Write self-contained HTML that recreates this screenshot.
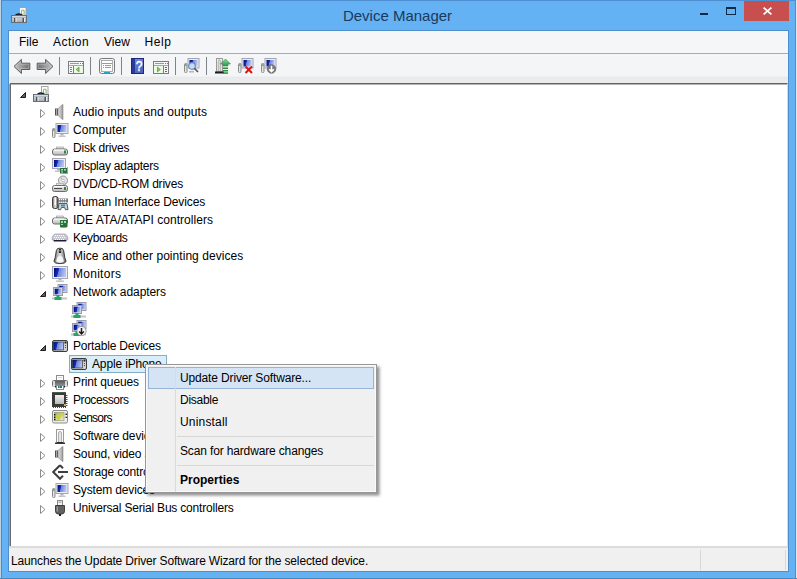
<!DOCTYPE html>
<html><head><meta charset="utf-8"><style>
html,body{margin:0;padding:0;}
body{width:797px;height:579px;overflow:hidden;position:relative;background:#64b1f4;font-family:"Liberation Sans",sans-serif;font-size:12px;color:#000;}
.a{position:absolute;}
svg.a{overflow:visible;}
#edgeL{left:0;top:0;width:1px;height:579px;background:#bcd2e0;}#edgeL2{left:1px;top:0;width:1px;height:579px;background:#4d8cc8;}
#edgeR{left:796px;top:0;width:1px;height:579px;background:#dcecf4;}#edgeR2{left:795px;top:0;width:1px;height:579px;background:#4d8cc8;}
#edgeT{left:0;top:0;width:797px;height:1px;background:#4f8ed0;}#clientb{left:8px;top:30px;width:779px;height:540px;border:1px solid #4e8fcb;}
#edgeB{left:0;top:578px;width:797px;height:1px;background:#4a88c2;}
#title{left:-1px;top:1px;width:797px;height:30px;text-align:center;line-height:30px;font-size:15px;color:#1b3a5c;}
#close{left:744px;top:1px;width:45px;height:20px;background:#c7504e;}
#menubar{left:9px;top:31px;width:779px;height:22px;background:#f5f6f7;border-bottom:1px solid #a8acb0;}
#menubar span{position:absolute;top:4px;}
#toolbar{left:9px;top:54px;width:779px;height:30px;background:linear-gradient(#f4f5f7 0,#f4f5f7 22px,#e9eaec 23px,#ebecee 30px);}
.sep{top:57px;width:1px;height:18px;background:#7f8387;}
#tree{left:10px;top:83px;width:776px;height:462px;background:#fff;border-top:1px solid #646464;border-left:1px solid #6a6a6a;border-right:1px solid #dadada;box-shadow:inset 0 1px 0 #b4b4b4;}
#status{left:9px;top:546px;width:779px;height:23px;background:#f0f0f0;border-top:2px solid #dcdcdc;}
.t{position:absolute;white-space:nowrap;}
#cm{left:145px;top:364px;width:230px;height:127px;background:#f0f0f0;border:1px solid #979797;box-shadow:inset 0 0 0 1px #f9f9f9,2px 2px 3px 0.5px rgba(0,0,0,0.45);}
.cmi{left:34px;height:22px;line-height:22px;white-space:nowrap;}
</style></head><body>
<svg width="0" height="0" style="position:absolute"><defs>
<linearGradient id="scr" x1="0" y1="0" x2="1" y2="0.2"><stop offset="0" stop-color="#000870"/><stop offset="0.4" stop-color="#1430b8"/><stop offset="0.46" stop-color="#6c84dc"/><stop offset="1" stop-color="#b4c2f0"/></linearGradient>
<linearGradient id="tbx" x1="0" y1="0" x2="0" y2="1"><stop offset="0" stop-color="#b4bcc4"/><stop offset="0.3" stop-color="#8c969e"/><stop offset="0.45" stop-color="#c8ced4"/><stop offset="1" stop-color="#a2aab2"/></linearGradient>
<linearGradient id="arrh" x1="0" y1="0" x2="1" y2="0"><stop offset="0" stop-color="#c8c8c8"/><stop offset="0.5" stop-color="#9a9a9a"/><stop offset="1" stop-color="#6e6e6e"/></linearGradient>
<linearGradient id="prn" x1="0" y1="0" x2="0" y2="1"><stop offset="0" stop-color="#5c5c5c"/><stop offset="1" stop-color="#8e8e8e"/></linearGradient>
<linearGradient id="sens" x1="0" y1="0" x2="1" y2="1"><stop offset="0" stop-color="#9aa858"/><stop offset="0.5" stop-color="#c8d890"/><stop offset="1" stop-color="#e4ecc8"/></linearGradient>
<linearGradient id="scr2" x1="0" y1="0" x2="1" y2="0.2"><stop offset="0" stop-color="#000870"/><stop offset="0.55" stop-color="#1430b8"/><stop offset="0.62" stop-color="#7088dc"/><stop offset="1" stop-color="#a8b8ec"/></linearGradient>
<linearGradient id="gry" x1="0" y1="0" x2="0" y2="1"><stop offset="0" stop-color="#f2f2f2"/><stop offset="1" stop-color="#b9b9b9"/></linearGradient>
<linearGradient id="gryh" x1="0" y1="0" x2="1" y2="0"><stop offset="0" stop-color="#6a6a6a"/><stop offset="0.5" stop-color="#e4e4e4"/><stop offset="1" stop-color="#5a5a5a"/></linearGradient>
<linearGradient id="arr" x1="0" y1="0" x2="0" y2="1"><stop offset="0" stop-color="#b8b8b8"/><stop offset="0.5" stop-color="#6e6e6e"/><stop offset="1" stop-color="#a8a8a8"/></linearGradient>
<linearGradient id="cone" x1="0" y1="0" x2="1" y2="0"><stop offset="0" stop-color="#d8d8d8"/><stop offset="0.6" stop-color="#bdbdbd"/><stop offset="1" stop-color="#8e8e8e"/></linearGradient>
<linearGradient id="grn" x1="0" y1="0" x2="0" y2="1"><stop offset="0" stop-color="#8fdc9c"/><stop offset="1" stop-color="#1f9a44"/></linearGradient>
<linearGradient id="hlp" x1="0" y1="0" x2="0.3" y2="1"><stop offset="0" stop-color="#7088dc"/><stop offset="1" stop-color="#4a62c0"/></linearGradient>
</defs></svg>
<div class="a" id="edgeT"></div><div class="a" id="clientb"></div><div class="a" id="title">Device Manager</div><svg class="a" style="left:11px;top:7px" width="16" height="16" viewBox="0 0 16 16"><rect x="8.5" y="0.5" width="6.5" height="8" fill="#fdfdfd" stroke="#a4a4a4"/><path d="M10.5 8.5 V4.3 A1.3 1.3 0 0 1 13.1 4.3 V8.5" fill="none" stroke="#90b078" stroke-width="1.1"/><path d="M4 8.8 Q7.5 5.4 11.5 8.4" fill="none" stroke="#141414" stroke-width="1.5"/><rect x="0.5" y="8.5" width="15" height="7" fill="url(#tbx)" stroke="#66707a"/><rect x="1" y="9" width="14" height="1.5" fill="#d4dae0"/><rect x="3" y="11" width="1.5" height="4" fill="#4a5258"/><rect x="11.5" y="11" width="1.5" height="4" fill="#4a5258"/><rect x="4.5" y="11" width="1" height="4" fill="#e8ecf0"/><rect x="13" y="11" width="1" height="4" fill="#e8ecf0"/></svg><div class="a" style="left:700px;top:13px;width:8px;height:2px;background:#0f2a46"></div><div class="a" style="left:726px;top:7px;width:8px;height:5px;border:1px solid #0f2a46;border-top-width:2px"></div><div class="a" id="close"></div><svg class="a" style="left:763px;top:7px" width="9" height="8" viewBox="0 0 9 8"><path d="M0.6 0.6 L8.4 7.4 M8.4 0.6 L0.6 7.4" stroke="#fff" stroke-width="1.8"/></svg><div class="a" id="menubar"><span style="left:10px">File</span><span style="left:44px;letter-spacing:0.45px">Action</span><span style="left:95px">View</span><span style="left:135.5px;letter-spacing:0.6px">Help</span></div><div class="a" id="toolbar"></div><svg class="a" style="left:13px;top:58px" width="18" height="18" viewBox="0 0 18 18"><path d="M1 8.4 L8.4 1.4 L8.4 5.2 L16.8 5.2 L16.8 11.5 L8.4 11.5 L8.4 15.5 Z" fill="url(#arrh)" stroke="#5c5c5c" stroke-width="1" stroke-linejoin="round"/><path d="M2.6 8.4 L7.4 3.8 L7.4 6.2 L15.8 6.2 L15.8 10.5 L7.4 10.5 L7.4 13.1 Z" fill="none" stroke="#d8d8d8" stroke-width="0.6" opacity="0.7"/></svg><svg class="a" style="left:36px;top:58px" width="18" height="18" viewBox="0 0 18 18"><g transform="translate(18,0) scale(-1,1)"><path d="M1 8.4 L8.4 1.4 L8.4 5.2 L16.8 5.2 L16.8 11.5 L8.4 11.5 L8.4 15.5 Z" fill="url(#arrh)" stroke="#5c5c5c" stroke-width="1" stroke-linejoin="round"/><path d="M2.6 8.4 L7.4 3.8 L7.4 6.2 L15.8 6.2 L15.8 10.5 L7.4 10.5 L7.4 13.1 Z" fill="none" stroke="#d8d8d8" stroke-width="0.6" opacity="0.7"/></g></svg><svg class="a" style="left:68px;top:61px" width="16" height="13" viewBox="0 0 16 13"><rect x="0.5" y="0.5" width="15" height="12" fill="#f6f6f6" stroke="#7c7c7c"/><rect x="2" y="2" width="9" height="1" fill="#9a9a9a"/><rect x="12" y="2" width="1" height="1" fill="#7a7a7a"/><rect x="14" y="2" width="1" height="1" fill="#7a7a7a"/><rect x="1" y="4" width="14" height="1" fill="#a6a6a6"/><rect x="5" y="5" width="1" height="7" fill="#7c7c7c"/><rect x="6" y="5" width="9" height="7" fill="#eef8e6"/><path d="M11 6.2 L8.2 8.5 L11 10.8 Z" fill="#9ad080" stroke="#4e9a3a" stroke-width="0.8"/><g fill="#5a88b4"><rect x="2" y="6" width="2" height="1"/><rect x="2" y="8" width="2" height="1"/><rect x="2" y="10" width="2" height="1"/></g></svg><svg class="a" style="left:99px;top:58px" width="16" height="16" viewBox="0 0 16 16"><rect x="0.5" y="0.5" width="15" height="15" rx="2" fill="#f4f4f4" stroke="#7a7a7a"/><rect x="2.5" y="2.5" width="11" height="11" fill="#fff" stroke="#9a9a9a" stroke-width="0.8"/><rect x="3" y="5" width="10" height="1" fill="#9a9a9a"/><g fill="#7aa0c0"><rect x="4" y="7" width="1" height="1"/><rect x="6" y="7" width="6" height="1"/><rect x="4" y="9" width="1" height="1"/><rect x="6" y="9" width="6" height="1"/></g><rect x="5" y="14" width="6" height="1.5" fill="#2aa0d0"/></svg><svg class="a" style="left:131px;top:58px" width="13" height="16" viewBox="0 0 13 16"><rect x="0.5" y="0.5" width="12" height="15" fill="#5670c8" stroke="#1c2878"/><rect x="1" y="1" width="3" height="14" fill="#2a3a9c"/><rect x="4" y="1" width="8" height="14" fill="url(#hlp)"/><text x="0" y="0" transform="translate(8.2,13.2) scale(0.8,1)" font-family="Liberation Sans" font-size="15" fill="#fff" stroke="#fff" stroke-width="0.5" text-anchor="middle">?</text></svg><svg class="a" style="left:153px;top:61px" width="16" height="13" viewBox="0 0 16 13"><rect x="0.5" y="0.5" width="15" height="12" fill="#f6f6f6" stroke="#7c7c7c"/><rect x="2" y="2" width="9" height="1" fill="#9a9a9a"/><rect x="12" y="2" width="1" height="1" fill="#7a7a7a"/><rect x="14" y="2" width="1" height="1" fill="#7a7a7a"/><rect x="1" y="4" width="14" height="1" fill="#a6a6a6"/><rect x="10" y="5" width="1" height="7" fill="#7c7c7c"/><rect x="1" y="5" width="9" height="7" fill="#eef8e6"/><path d="M4.5 6.2 L7.3 8.5 L4.5 10.8 Z" fill="#9ad080" stroke="#4e9a3a" stroke-width="0.8"/><g fill="#6a6a6a"><rect x="12" y="6" width="2" height="1"/><rect x="12" y="8" width="2" height="1"/><rect x="12" y="10" width="2" height="1"/></g></svg><svg class="a" style="left:184px;top:58px" width="16" height="16" viewBox="0 0 16 16"><g transform="translate(0,5)"><rect x="0.5" y="0.5" width="2.5" height="9" rx="1" fill="#e4e4e4" stroke="#8c8c8c"/><rect x="1.2" y="1.3" width="1.2" height="1.4" fill="#3a7a3a"/></g><g transform="translate(3.5,0)"><rect x="0.5" y="0.5" width="11" height="9.5" fill="#ececf2" stroke="#a4a4b4"/><rect x="2" y="2" width="8" height="6.5" fill="url(#scr)"/></g><circle cx="8" cy="8" r="3.3" fill="#c8e0f8" stroke="#6a8ab8" stroke-width="1.2" opacity="0.95"/><path d="M10.3 10.3 L14 14" stroke="#505050" stroke-width="1.6"/><rect x="5" y="13" width="5" height="1.5" fill="#b4b4bc"/></svg><svg class="a" style="left:215px;top:58px" width="16" height="16" viewBox="0 0 16 16"><rect x="1.5" y="0.5" width="6" height="13" fill="#f4f4f4" stroke="#9a9a9a"/><path d="M3.2 13 V3.5 A1.3 1.3 0 0 1 5.8 3.5 V13" fill="#d8d8d8" stroke="#9a9a9a" stroke-width="0.7"/><path d="M3 2 L5 1.5" stroke="#c8c080" stroke-width="0.8"/><rect x="0" y="13.5" width="9" height="2" fill="#1e1e1e"/><path d="M10.5 1 L15.5 6 L13 6 L13 8 L8 8 L8 6 L5.5 6 Z" fill="url(#grn)" stroke="#3a8a4a" stroke-width="0.6"/><rect x="8" y="9.5" width="5" height="1.5" fill="#2a8a40"/><rect x="8" y="12" width="5" height="1.5" fill="#2a8a40"/><rect x="8" y="14.3" width="5" height="1.5" fill="#2a8a40"/></svg><svg class="a" style="left:238px;top:58px" width="16" height="16" viewBox="0 0 16 16"><g transform="translate(0,5)"><rect x="0.5" y="0.5" width="2.5" height="9" rx="1" fill="#e4e4e4" stroke="#8c8c8c"/><rect x="1.2" y="1.3" width="1.2" height="1.4" fill="#3a7a3a"/></g><g transform="translate(3.5,0)"><rect x="0.5" y="0.5" width="11" height="9.5" fill="#ececf2" stroke="#a4a4b4"/><rect x="2" y="2" width="8" height="6.5" fill="url(#scr)"/></g><path d="M7.5 8.5 L14 15 M14 8.5 L7.5 15" stroke="#d01818" stroke-width="2"/></svg><svg class="a" style="left:261px;top:58px" width="16" height="16" viewBox="0 0 16 16"><g transform="translate(0,5)"><rect x="0.5" y="0.5" width="2.5" height="9" rx="1" fill="#e4e4e4" stroke="#8c8c8c"/><rect x="1.2" y="1.3" width="1.2" height="1.4" fill="#3a7a3a"/></g><g transform="translate(3.5,0)"><rect x="0.5" y="0.5" width="11" height="9.5" fill="#ececf2" stroke="#a4a4b4"/><rect x="2" y="2" width="8" height="6.5" fill="url(#scr)"/></g><circle cx="10.5" cy="11" r="4.3" fill="#7a7a7a" stroke="#5a5a5a" stroke-width="0.6"/><path d="M10.5 7.8 V13.5 M8.2 11.2 L10.5 13.6 L12.8 11.2" fill="none" stroke="#fff" stroke-width="1.5"/></svg><div class="a sep" style="left:59px"></div><div class="a sep" style="left:90px"></div><div class="a sep" style="left:121px"></div><div class="a sep" style="left:175px"></div><div class="a sep" style="left:206px"></div><div class="a" id="tree"></div><svg class="a" style="left:20px;top:92px" width="6" height="6" viewBox="0 0 6 6"><path d="M5.5 0.5 L5.5 5.5 L0.5 5.5 Z" fill="#5e5e5e" stroke="#1e1e1e" stroke-width="1" stroke-linejoin="round"/></svg><svg class="a" style="left:33px;top:86px" width="16" height="16" viewBox="0 0 16 16"><rect x="8.5" y="0.5" width="6.5" height="8" fill="#fdfdfd" stroke="#a4a4a4"/><path d="M10.5 8.5 V4.3 A1.3 1.3 0 0 1 13.1 4.3 V8.5" fill="none" stroke="#90b078" stroke-width="1.1"/><path d="M4 8.8 Q7.5 5.4 11.5 8.4" fill="none" stroke="#141414" stroke-width="1.5"/><rect x="0.5" y="8.5" width="15" height="7" fill="url(#tbx)" stroke="#66707a"/><rect x="1" y="9" width="14" height="1.5" fill="#d4dae0"/><rect x="3" y="11" width="1.5" height="4" fill="#4a5258"/><rect x="11.5" y="11" width="1.5" height="4" fill="#4a5258"/><rect x="4.5" y="11" width="1" height="4" fill="#e8ecf0"/><rect x="13" y="11" width="1" height="4" fill="#e8ecf0"/></svg><svg class="a" style="left:40px;top:109px" width="6" height="9" viewBox="0 0 6 9"><path d="M0.5 0.5 L5 4.5 L0.5 8.5 Z" fill="#fff" stroke="#8c8c8c"/></svg><svg class="a" style="left:52px;top:104px" width="16" height="16" viewBox="0 0 16 16"><rect x="3" y="4.5" width="3" height="7" fill="#505050"/><rect x="4" y="5" width="1" height="6" fill="#a8a8a8"/><path d="M6 4.5 L10.5 0.5 L11 0.5 L11 15.5 L10.5 15.5 L6 11.5 Z" fill="url(#cone)" stroke="#8a8a8a" stroke-width="0.6"/></svg><div class="t" style="left:73px;top:103px;line-height:18px;letter-spacing:0.083px">Audio inputs and outputs</div><svg class="a" style="left:40px;top:127px" width="6" height="9" viewBox="0 0 6 9"><path d="M0.5 0.5 L5 4.5 L0.5 8.5 Z" fill="#fff" stroke="#8c8c8c"/></svg><svg class="a" style="left:52px;top:122px" width="16" height="16" viewBox="0 0 16 16"><g transform="translate(0,6)"><rect x="0.5" y="0.5" width="2.5" height="9" rx="1" fill="#e4e4e4" stroke="#8c8c8c"/><rect x="1.2" y="1.3" width="1.2" height="1.4" fill="#3a7a3a"/></g><g transform="translate(3.5,1) scale(1.0)"><rect x="0.5" y="0.5" width="12" height="10" fill="#ececf2" stroke="#a4a4b4"/><rect x="2" y="2" width="9" height="7" fill="url(#scr)"/><rect x="5" y="11" width="3" height="1.5" fill="#b0b0b8"/><rect x="3" y="12.5" width="7" height="1.5" fill="#c4c4cc"/></g></svg><div class="t" style="left:73px;top:121px;line-height:18px;letter-spacing:0.086px">Computer</div><svg class="a" style="left:40px;top:145px" width="6" height="9" viewBox="0 0 6 9"><path d="M0.5 0.5 L5 4.5 L0.5 8.5 Z" fill="#fff" stroke="#8c8c8c"/></svg><svg class="a" style="left:52px;top:140px" width="16" height="16" viewBox="0 0 16 16"><rect x="4.5" y="7.0" width="7" height="2" fill="#e0e0e0" stroke="#a8a8a8" stroke-width="0.7"/><rect x="0.5" y="9.0" width="15" height="6" rx="2" fill="url(#gry)" stroke="#6e6e6e"/><rect x="2" y="9.5" width="10" height="1" fill="#fff"/><rect x="12" y="10.5" width="2" height="3" fill="#2e8a3a"/></svg><div class="t" style="left:73px;top:139px;line-height:18px;letter-spacing:-0.225px">Disk drives</div><svg class="a" style="left:40px;top:163px" width="6" height="9" viewBox="0 0 6 9"><path d="M0.5 0.5 L5 4.5 L0.5 8.5 Z" fill="#fff" stroke="#8c8c8c"/></svg><svg class="a" style="left:52px;top:158px" width="16" height="16" viewBox="0 0 16 16"><rect x="0.5" y="0.5" width="13" height="10" fill="#ececf2" stroke="#a4a4b4"/><rect x="2" y="2" width="10" height="7" fill="url(#scr)"/><rect x="5" y="11" width="3" height="1.5" fill="#b0b0b8"/><rect x="3" y="12.5" width="6" height="1.5" fill="#c4c4cc"/><rect x="8" y="10" width="7.5" height="5.5" fill="#2c6e3c"/><rect x="9" y="11" width="2" height="1.6" fill="#9fdca8"/><rect x="12" y="11" width="2" height="1.6" fill="#9fdca8"/><rect x="9" y="13.4" width="2" height="1.2" fill="#9fdca8"/><rect x="15" y="9" width="1" height="7" fill="#a0a0a0"/><rect x="8.5" y="15.5" width="6" height="0.5" fill="#9ab04a"/></svg><div class="t" style="left:73px;top:157px;line-height:18px;letter-spacing:-0.227px">Display adapters</div><svg class="a" style="left:40px;top:181px" width="6" height="9" viewBox="0 0 6 9"><path d="M0.5 0.5 L5 4.5 L0.5 8.5 Z" fill="#fff" stroke="#8c8c8c"/></svg><svg class="a" style="left:52px;top:176px" width="16" height="16" viewBox="0 0 16 16"><circle cx="11" cy="4.5" r="4.5" fill="#e4e4e4" stroke="#8c8c8c" stroke-width="0.9"/><circle cx="11" cy="4.5" r="1.3" fill="#fff" stroke="#a0a0a0" stroke-width="0.6"/><path d="M9 1.5 L10 3.5 M12.5 6 L13.5 8" stroke="#b494c4" stroke-width="0.8"/><rect x="4.5" y="7.5" width="7" height="2" fill="#e0e0e0" stroke="#a8a8a8" stroke-width="0.7"/><rect x="0.5" y="9.5" width="15" height="6" rx="2" fill="url(#gry)" stroke="#6e6e6e"/><rect x="2" y="10" width="10" height="1" fill="#fff"/><rect x="2" y="12" width="8" height="1" fill="#4a4a4a"/><rect x="12" y="11" width="2" height="3" fill="#2e8a3a"/></svg><div class="t" style="left:73px;top:175px;line-height:18px;letter-spacing:-0.2px">DVD/CD-ROM drives</div><svg class="a" style="left:40px;top:199px" width="6" height="9" viewBox="0 0 6 9"><path d="M0.5 0.5 L5 4.5 L0.5 8.5 Z" fill="#fff" stroke="#8c8c8c"/></svg><svg class="a" style="left:52px;top:194px" width="16" height="16" viewBox="0 0 16 16"><rect x="0.5" y="2.5" width="5.5" height="12" rx="2" fill="url(#gryh)" stroke="#333" stroke-width="0.9"/><path d="M2.6 4 Q3.2 3.4 4 4 L3.8 6 L4 11 L2.4 11 L2.7 6 Z" fill="#fff"/><rect x="6" y="4.5" width="10" height="4" fill="#7a7a80"/><g fill="#fff"><rect x="7" y="5" width="1.2" height="1.2"/><rect x="9" y="5" width="1.2" height="1.2"/><rect x="11" y="5" width="1.2" height="1.2"/><rect x="13" y="5" width="1.2" height="1.2"/><rect x="7" y="7.6" width="1.2" height="1"/><rect x="9" y="7.6" width="1.2" height="1"/><rect x="11" y="7.6" width="1.2" height="1"/><rect x="13" y="7.6" width="1.2" height="1"/></g><path d="M7 9.5 L15 9.5 L16 15.5 L13.5 15.8 L12.5 13.5 L9.5 13.5 L8.5 15.8 L6 15.5 Z" fill="#c4d0dc" stroke="#3a3a3a" stroke-width="0.8"/><rect x="9" y="10.5" width="4" height="2" fill="#4a8aa8"/></svg><div class="t" style="left:73px;top:193px;line-height:18px;letter-spacing:-0.114px">Human Interface Devices</div><svg class="a" style="left:40px;top:217px" width="6" height="9" viewBox="0 0 6 9"><path d="M0.5 0.5 L5 4.5 L0.5 8.5 Z" fill="#fff" stroke="#8c8c8c"/></svg><svg class="a" style="left:52px;top:212px" width="16" height="16" viewBox="0 0 16 16"><rect x="4.5" y="4.0" width="7" height="2" fill="#e0e0e0" stroke="#a8a8a8" stroke-width="0.7"/><rect x="0.5" y="6.0" width="15" height="6" rx="2" fill="url(#gry)" stroke="#6e6e6e"/><rect x="2" y="6.5" width="10" height="1" fill="#fff"/><rect x="8" y="8" width="7.5" height="7" fill="#2c6e3c"/><rect x="9" y="9" width="2" height="2" fill="#9fdca8"/><rect x="12" y="9" width="2" height="2" fill="#9fdca8"/><rect x="9" y="12" width="2" height="1" fill="#9fdca8"/><rect x="8.5" y="15" width="6" height="1" fill="#9ab04a"/></svg><div class="t" style="left:73px;top:211px;line-height:18px;letter-spacing:0.033px">IDE ATA/ATAPI controllers</div><svg class="a" style="left:40px;top:235px" width="6" height="9" viewBox="0 0 6 9"><path d="M0.5 0.5 L5 4.5 L0.5 8.5 Z" fill="#fff" stroke="#8c8c8c"/></svg><svg class="a" style="left:52px;top:230px" width="16" height="16" viewBox="0 0 16 16"><path d="M2.5 4 L13.5 4 L15.8 7 L15.8 10 L0.2 10 L0.2 7 Z" fill="#c8c8d4" stroke="#a4a4b4" stroke-width="0.8"/><g fill="#ffffff"><rect x="3" y="5" width="1" height="1"/><rect x="5" y="5" width="1" height="1"/><rect x="7" y="5" width="1" height="1"/><rect x="9" y="5" width="1" height="1"/><rect x="11" y="5" width="1" height="1"/><rect x="2" y="7" width="1" height="1"/><rect x="4" y="7" width="1" height="1"/><rect x="6" y="7" width="1" height="1"/><rect x="8" y="7" width="1" height="1"/><rect x="10" y="7" width="1" height="1"/><rect x="12" y="7" width="1" height="1"/><rect x="3" y="9" width="1" height="1"/><rect x="5" y="9" width="1" height="1"/><rect x="7" y="9" width="1" height="1"/><rect x="9" y="9" width="1" height="1"/><rect x="11" y="9" width="1" height="1"/></g><rect x="1.5" y="10" width="13" height="1.5" rx="0.7" fill="#1e1e34"/></svg><div class="t" style="left:73px;top:229px;line-height:18px;letter-spacing:-0.312px">Keyboards</div><svg class="a" style="left:40px;top:253px" width="6" height="9" viewBox="0 0 6 9"><path d="M0.5 0.5 L5 4.5 L0.5 8.5 Z" fill="#fff" stroke="#8c8c8c"/></svg><svg class="a" style="left:52px;top:248px" width="16" height="16" viewBox="0 0 16 16"><path d="M5.5 0.6 Q8 -0.2 10.5 0.6 Q12 2 12.2 6 Q12.6 10 14 13 Q14 15.5 8 15.6 Q2 15.5 2 13 Q3.4 10 3.8 6 Q4 2 5.5 0.6 Z" fill="url(#gryh)" stroke="#2e2e2e" stroke-width="0.9"/><path d="M7 1.2 Q8 0.8 9 1.2 L9.2 4.6 Q8 5.6 6.8 4.6 Z" fill="#101010"/><rect x="7.6" y="2" width="0.9" height="1.6" fill="#ddd"/><path d="M5.5 9 Q8 7 10.5 9 L12 13.5 Q8 15 4 13.5 Z" fill="#f6f6f6"/></svg><div class="t" style="left:73px;top:247px;line-height:18px;letter-spacing:0.047px">Mice and other pointing devices</div><svg class="a" style="left:40px;top:271px" width="6" height="9" viewBox="0 0 6 9"><path d="M0.5 0.5 L5 4.5 L0.5 8.5 Z" fill="#fff" stroke="#8c8c8c"/></svg><svg class="a" style="left:52px;top:266px" width="16" height="16" viewBox="0 0 16 16"><rect x="0.5" y="0.5" width="15" height="12" fill="#ececf2" stroke="#a4a4b4"/><rect x="2" y="2" width="12" height="9" fill="url(#scr)"/><rect x="6.5" y="13" width="3" height="1.5" fill="#b0b0b8"/><rect x="4" y="14.5" width="8" height="1.5" fill="#c4c4cc"/></svg><div class="t" style="left:73px;top:265px;line-height:18px;letter-spacing:0.271px">Monitors</div><svg class="a" style="left:40px;top:291px" width="6" height="6" viewBox="0 0 6 6"><path d="M5.5 0.5 L5.5 5.5 L0.5 5.5 Z" fill="#5e5e5e" stroke="#1e1e1e" stroke-width="1" stroke-linejoin="round"/></svg><svg class="a" style="left:52px;top:284px" width="16" height="16" viewBox="0 0 16 16"><g transform="translate(5.5,0)"><rect x="0.5" y="0.5" width="9" height="8" fill="#dcdce8" stroke="#9a9aae"/><rect x="1.7" y="1.7" width="6.6" height="5.6" fill="url(#scr2)"/></g><g transform="translate(1,3)"><rect x="0.5" y="0.5" width="9" height="8" fill="#dcdce8" stroke="#9a9aae"/><rect x="1.7" y="1.7" width="6.6" height="5.6" fill="url(#scr2)"/></g><rect x="0" y="13.5" width="15" height="2" fill="#c4c4c4"/><rect x="4.5" y="11" width="3" height="2.5" fill="#22a862"/><rect x="2.5" y="13" width="7" height="3" fill="#22a862"/></svg><div class="t" style="left:73px;top:283px;line-height:18px;letter-spacing:-0.067px">Network adapters</div><svg class="a" style="left:71px;top:302px" width="16" height="16" viewBox="0 0 16 16"><g transform="translate(5.5,0)"><rect x="0.5" y="0.5" width="9" height="8" fill="#dcdce8" stroke="#9a9aae"/><rect x="1.7" y="1.7" width="6.6" height="5.6" fill="url(#scr2)"/></g><g transform="translate(1,3)"><rect x="0.5" y="0.5" width="9" height="8" fill="#dcdce8" stroke="#9a9aae"/><rect x="1.7" y="1.7" width="6.6" height="5.6" fill="url(#scr2)"/></g><rect x="0" y="13.5" width="15" height="2" fill="#c4c4c4"/><rect x="4.5" y="11" width="3" height="2.5" fill="#22a862"/><rect x="2.5" y="13" width="7" height="3" fill="#22a862"/></svg><svg class="a" style="left:71px;top:320px" width="16" height="16" viewBox="0 0 16 16"><g transform="translate(5.5,0)"><rect x="0.5" y="0.5" width="9" height="8" fill="#dcdce8" stroke="#9a9aae"/><rect x="1.7" y="1.7" width="6.6" height="5.6" fill="url(#scr2)"/></g><g transform="translate(1,3)"><rect x="0.5" y="0.5" width="9" height="8" fill="#dcdce8" stroke="#9a9aae"/><rect x="1.7" y="1.7" width="6.6" height="5.6" fill="url(#scr2)"/></g><rect x="0" y="13.5" width="15" height="2" fill="#c4c4c4"/><rect x="4.5" y="11" width="3" height="2.5" fill="#22a862"/><rect x="2.5" y="13" width="7" height="3" fill="#22a862"/><circle cx="10.5" cy="11" r="4.6" fill="#f4f4f4" stroke="#8a8a8a" stroke-width="0.8"/><path d="M10.5 8 V13.8 M8.2 11.4 L10.5 13.9 L12.8 11.4" fill="none" stroke="#1e1e1e" stroke-width="1.5"/></svg><svg class="a" style="left:40px;top:345px" width="6" height="6" viewBox="0 0 6 6"><path d="M5.5 0.5 L5.5 5.5 L0.5 5.5 Z" fill="#5e5e5e" stroke="#1e1e1e" stroke-width="1" stroke-linejoin="round"/></svg><svg class="a" style="left:52px;top:338px" width="16" height="16" viewBox="0 0 16 16"><rect x="0.5" y="2.5" width="15" height="11" rx="1.5" fill="#d0d0d0" stroke="#3c3c3c"/><rect x="1.5" y="4" width="10" height="8" fill="url(#scr)" stroke="#222" stroke-width="0.6"/><rect x="12.5" y="3.5" width="2" height="2" fill="#222"/><rect x="13" y="7" width="1" height="1" fill="#555"/><rect x="13" y="9" width="1" height="1" fill="#555"/></svg><div class="t" style="left:73px;top:337px;line-height:18px;letter-spacing:-0.187px">Portable Devices</div><div class="a" style="left:69px;top:355px;width:96px;height:16px;background:#d9eef9;border:1px solid #84aec2"></div><svg class="a" style="left:71px;top:356px" width="16" height="16" viewBox="0 0 16 16"><rect x="0.5" y="2.5" width="15" height="11" rx="1.5" fill="#d0d0d0" stroke="#3c3c3c"/><rect x="1.5" y="4" width="10" height="8" fill="url(#scr)" stroke="#222" stroke-width="0.6"/><rect x="12.5" y="3.5" width="2" height="2" fill="#222"/><rect x="13" y="7" width="1" height="1" fill="#555"/><rect x="13" y="9" width="1" height="1" fill="#555"/></svg><div class="t" style="left:92px;top:355px;line-height:18px;letter-spacing:-0.15px">Apple iPhone</div><svg class="a" style="left:40px;top:379px" width="6" height="9" viewBox="0 0 6 9"><path d="M0.5 0.5 L5 4.5 L0.5 8.5 Z" fill="#fff" stroke="#8c8c8c"/></svg><svg class="a" style="left:52px;top:374px" width="16" height="16" viewBox="0 0 16 16"><rect x="4.5" y="1.5" width="7" height="5" fill="#fcfcfc" stroke="#8c8c8c"/><rect x="6" y="3" width="4" height="1" fill="#dcdcdc"/><rect x="0.5" y="6.5" width="15" height="6" rx="1" fill="#d8d8d8" stroke="#6c6c6c"/><rect x="3" y="7" width="10" height="4.5" fill="url(#prn)"/><rect x="1" y="11" width="14" height="1.5" fill="#f6f6f6"/><rect x="3" y="11.5" width="1" height="2" fill="#222"/><rect x="12" y="11.5" width="1" height="2" fill="#222"/><rect x="4.5" y="11.5" width="7" height="4" fill="#fff" stroke="#8c8c8c"/><rect x="6" y="12" width="4" height="2" fill="#1e7878"/><rect x="7" y="12.5" width="1" height="1" fill="#a0e0e0"/></svg><div class="t" style="left:73px;top:373px;line-height:18px;letter-spacing:-0.118px">Print queues</div><svg class="a" style="left:40px;top:397px" width="6" height="9" viewBox="0 0 6 9"><path d="M0.5 0.5 L5 4.5 L0.5 8.5 Z" fill="#fff" stroke="#8c8c8c"/></svg><svg class="a" style="left:52px;top:392px" width="16" height="16" viewBox="0 0 16 16"><rect x="0" y="0" width="14" height="15" fill="#3a3a3a"/><rect x="0" y="0" width="14" height="1" fill="#4a5a4a"/><rect x="3" y="3" width="9" height="9" fill="url(#gry)"/><rect x="12" y="12" width="2" height="2" fill="#c8b070"/><g fill="#5a5040"><rect x="14" y="3" width="1.5" height="1"/><rect x="14" y="5" width="1.5" height="1"/><rect x="14" y="7" width="1.5" height="1"/><rect x="14" y="9" width="1.5" height="1"/><rect x="14" y="11" width="1.5" height="1"/><rect x="14" y="13" width="1.5" height="1"/><rect x="1" y="15" width="1" height="1"/><rect x="3" y="15" width="1" height="1"/><rect x="5" y="15" width="1" height="1"/><rect x="7" y="15" width="1" height="1"/><rect x="9" y="15" width="1" height="1"/><rect x="11" y="15" width="1" height="1"/><rect x="13" y="15" width="1" height="1"/></g></svg><div class="t" style="left:73px;top:391px;line-height:18px;letter-spacing:-0.433px">Processors</div><svg class="a" style="left:40px;top:415px" width="6" height="9" viewBox="0 0 6 9"><path d="M0.5 0.5 L5 4.5 L0.5 8.5 Z" fill="#fff" stroke="#8c8c8c"/></svg><svg class="a" style="left:52px;top:410px" width="16" height="16" viewBox="0 0 16 16"><rect x="0.5" y="0.5" width="15" height="12.5" rx="1.5" fill="#ececec" stroke="#8c8c8c"/><rect x="2.5" y="2.5" width="9.5" height="8" fill="url(#sens)" stroke="#8a9070" stroke-width="0.6"/><path d="M4.5 5 L6.5 8.8 L10.5 3" fill="none" stroke="#d8cc20" stroke-width="1.7"/><g fill="#111"><rect x="2" y="4" width="1.4" height="1.4"/><rect x="2" y="6.6" width="1.4" height="1.4"/><rect x="2" y="8.8" width="1.4" height="1.4"/><rect x="13.5" y="3.6" width="1.4" height="1.4"/><rect x="13.5" y="6.6" width="1.4" height="1.4"/></g><g fill="#fff"><rect x="13.5" y="5" width="1.4" height="1.4"/><rect x="13.5" y="8" width="1.4" height="1.4"/></g></svg><div class="t" style="left:73px;top:409px;line-height:18px;letter-spacing:-0.75px">Sensors</div><svg class="a" style="left:40px;top:433px" width="6" height="9" viewBox="0 0 6 9"><path d="M0.5 0.5 L5 4.5 L0.5 8.5 Z" fill="#fff" stroke="#8c8c8c"/></svg><svg class="a" style="left:52px;top:428px" width="16" height="16" viewBox="0 0 16 16"><rect x="4.5" y="1.5" width="7" height="13" fill="#fbfbfb" stroke="#9a9a9a"/><path d="M6.5 14 V5 A1.5 1.5 0 0 1 9.5 5 V14" fill="#e6e6e6" stroke="#a0a0a0" stroke-width="0.8"/><rect x="3" y="14.5" width="10" height="1.5" fill="#3a3a3a"/><rect x="5" y="14" width="6" height="1" fill="#2a2a2a"/></svg><div class="t" style="left:73px;top:427px;line-height:18px;letter-spacing:-0.15px">Software devices</div><svg class="a" style="left:40px;top:451px" width="6" height="9" viewBox="0 0 6 9"><path d="M0.5 0.5 L5 4.5 L0.5 8.5 Z" fill="#fff" stroke="#8c8c8c"/></svg><svg class="a" style="left:52px;top:446px" width="16" height="16" viewBox="0 0 16 16"><rect x="3" y="4.5" width="3" height="7" fill="#505050"/><rect x="4" y="5" width="1" height="6" fill="#a8a8a8"/><path d="M6 4.5 L10.5 0.5 L11 0.5 L11 15.5 L10.5 15.5 L6 11.5 Z" fill="url(#cone)" stroke="#8a8a8a" stroke-width="0.6"/></svg><div class="t" style="left:73px;top:445px;line-height:18px;letter-spacing:-0.15px">Sound, video and game controllers</div><svg class="a" style="left:40px;top:469px" width="6" height="9" viewBox="0 0 6 9"><path d="M0.5 0.5 L5 4.5 L0.5 8.5 Z" fill="#fff" stroke="#8c8c8c"/></svg><svg class="a" style="left:52px;top:464px" width="16" height="16" viewBox="0 0 16 16"><path d="M8 1.2 L1.2 8 L8 14.8 L11 11.8 M8 1.2 L11 4.2" fill="none" stroke="#3e3e3e" stroke-width="2"/><rect x="6" y="7" width="10" height="2" fill="#3e3e3e"/></svg><div class="t" style="left:73px;top:463px;line-height:18px;letter-spacing:-0.15px">Storage controllers</div><svg class="a" style="left:40px;top:487px" width="6" height="9" viewBox="0 0 6 9"><path d="M0.5 0.5 L5 4.5 L0.5 8.5 Z" fill="#fff" stroke="#8c8c8c"/></svg><svg class="a" style="left:52px;top:482px" width="16" height="16" viewBox="0 0 16 16"><g transform="translate(0,6)"><rect x="0.5" y="0.5" width="2.5" height="9" rx="1" fill="#e4e4e4" stroke="#8c8c8c"/><rect x="1.2" y="1.3" width="1.2" height="1.4" fill="#3a7a3a"/></g><g transform="translate(3.5,1) scale(1.0)"><rect x="0.5" y="0.5" width="12" height="10" fill="#ececf2" stroke="#a4a4b4"/><rect x="2" y="2" width="9" height="7" fill="url(#scr)"/><rect x="5" y="11" width="3" height="1.5" fill="#b0b0b8"/><rect x="3" y="12.5" width="7" height="1.5" fill="#c4c4cc"/></g></svg><div class="t" style="left:73px;top:481px;line-height:18px;letter-spacing:-0.15px">System devices</div><svg class="a" style="left:40px;top:505px" width="6" height="9" viewBox="0 0 6 9"><path d="M0.5 0.5 L5 4.5 L0.5 8.5 Z" fill="#fff" stroke="#8c8c8c"/></svg><svg class="a" style="left:52px;top:500px" width="16" height="16" viewBox="0 0 16 16"><rect x="5.5" y="0.5" width="5" height="5" fill="#f4f4f4" stroke="#8a8a8a"/><rect x="6.5" y="1.5" width="3" height="1.5" fill="#b0b0b0"/><path d="M3.5 5.5 L12.5 5.5 L12.5 11.5 Q12.5 13.5 10 14 L6 14 Q3.5 13.5 3.5 11.5 Z" fill="#626262" stroke="#333" stroke-width="0.9"/><rect x="4.6" y="6.5" width="1.4" height="5" fill="#9a9a9a"/><rect x="7" y="14" width="2" height="2" fill="#222"/></svg><div class="t" style="left:73px;top:499px;line-height:18px;letter-spacing:-0.194px">Universal Serial Bus controllers</div><div class="a" id="status"><span class="t" style="left:2px;top:2px;line-height:22px;letter-spacing:-0.156px">Launches the Update Driver Software Wizard for the selected device.</span></div><div class="a" style="left:700px;top:550px;width:1px;height:20px;background:#d8d8d8"></div><div class="a" style="left:785px;top:550px;width:1px;height:20px;background:#d8d8d8"></div><div class="a" id="cm"><div class="a" style="left:2px;top:2px;width:224px;height:20px;background:#d4e4f4;border:1px solid #96b4d6"></div><div class="a" style="left:29px;top:2px;width:1px;height:125px;background:#d9dadb"></div><div class="a cmi" style="top:2px;letter-spacing:-0.142px">Update Driver Software...</div><div class="a cmi" style="top:24px;letter-spacing:-0.267px">Disable</div><div class="a cmi" style="top:46px;letter-spacing:0.175px">Uninstall</div><div class="a" style="left:31px;top:71px;width:197px;height:1px;background:#d7d7d7"></div><div class="a cmi" style="top:75px;letter-spacing:-0.146px">Scan for hardware changes</div><div class="a" style="left:31px;top:100px;width:197px;height:1px;background:#d7d7d7"></div><div class="a cmi" style="top:104px;font-weight:bold">Properties</div></div><div class="a" id="edgeL"></div><div class="a" id="edgeL2"></div><div class="a" id="edgeR"></div><div class="a" id="edgeR2"></div><div class="a" id="edgeB"></div>
</body></html>
